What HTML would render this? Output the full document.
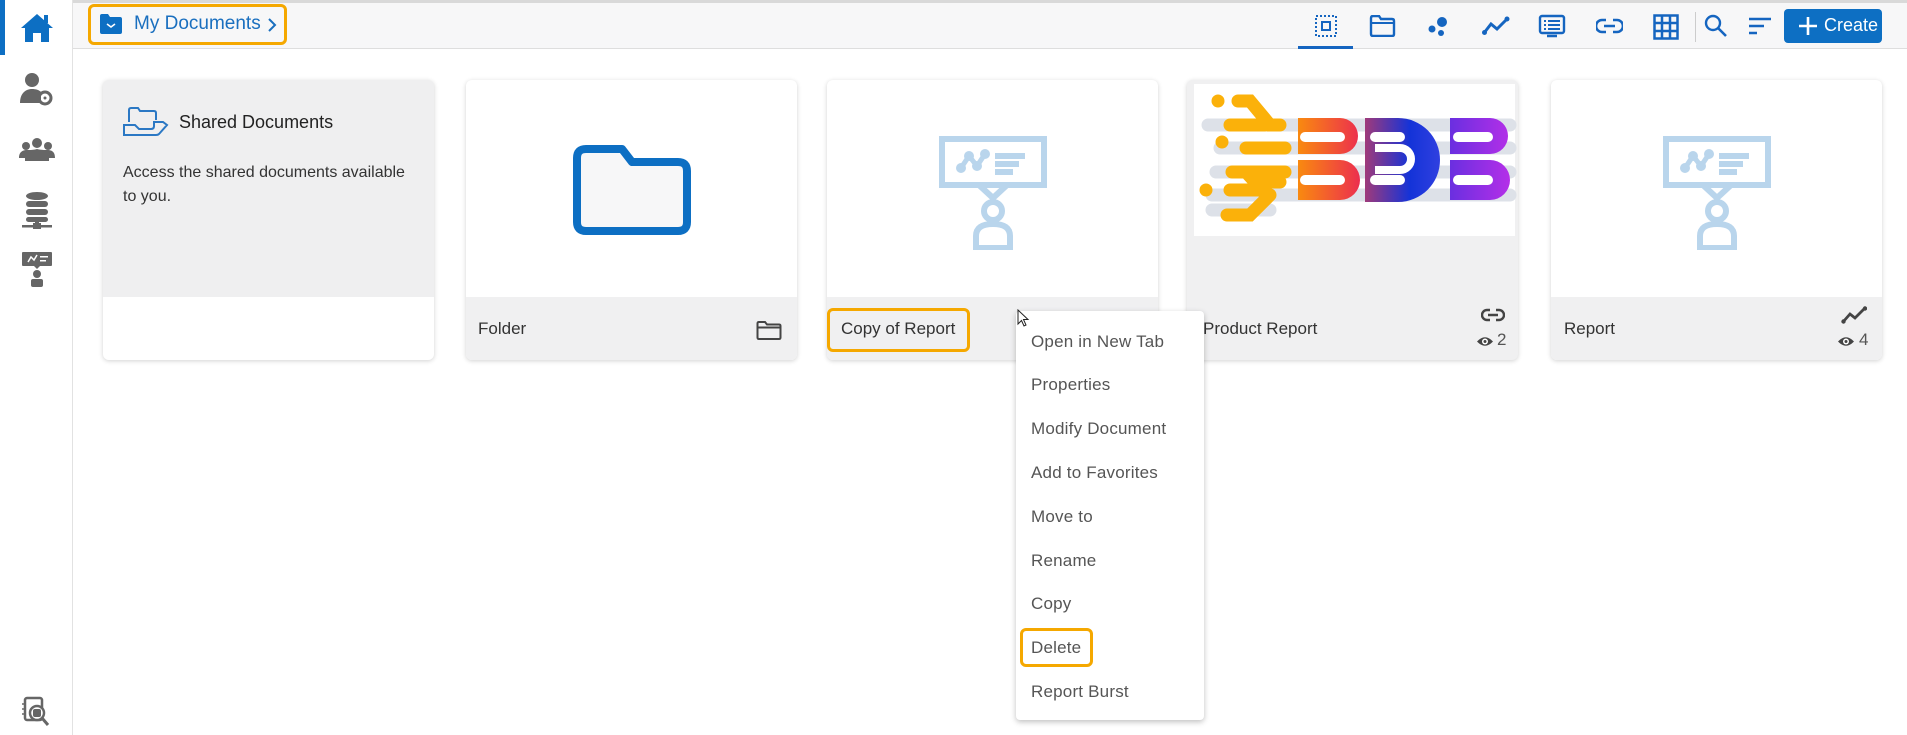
<!DOCTYPE html>
<html><head><meta charset="utf-8"><style>
*{margin:0;padding:0;box-sizing:border-box}
body{width:1907px;height:735px;overflow:hidden;background:#fff;font-family:"Liberation Sans",sans-serif;position:relative}
.abs{position:absolute}
.side{left:0;top:0;width:73px;height:735px;border-right:1px solid #e2e2e2;background:#fff}
.top{left:73px;top:0;width:1834px;height:49px;background:#f7f7f8;border-bottom:1px solid #dedede;border-top:3px solid #d9d9d9}
.card{background:#fff;border-radius:6px;box-shadow:0 1px 5px rgba(0,0,0,.18);overflow:hidden;top:80px;height:280px;width:331px}
.foot{position:absolute;left:0;bottom:0;width:100%;height:63px;background:#f0f0f1}
.lbl{position:absolute;font-size:17px;color:#333;top:22px}
.menu{left:1016px;top:311px;width:188px;height:409px;background:#fff;border-radius:4px;box-shadow:0 2px 6px rgba(0,0,0,.25)}
.menu div{position:absolute;left:15px;font-size:17px;color:#555;letter-spacing:.2px}
.hl{border:3px solid #f5a800;border-radius:6px;position:absolute}
</style></head><body>
<div class="abs side"></div>
<div class="abs" style="left:0;top:0;width:5px;height:55px;background:#0d6fc3"></div>
<svg class="abs" style="left:19px;top:12px" width="36" height="32" viewBox="0 0 36 32"><path d="M18 2 L2 16 L6 16 L6 30 L14 30 L14 21 L22 21 L22 30 L30 30 L30 16 L34 16 Z" fill="#0d6fc3"/><rect x="25" y="3" width="4" height="8" fill="#0d6fc3"/></svg>
<svg class="abs" style="left:19px;top:72px" width="34" height="34" viewBox="0 0 34 34"><circle cx="13" cy="8" r="7" fill="#666"/><path d="M1 31 C1 20 8 17 13 17 C17 17 20 18 22 20 L22 31 Z" fill="#666"/><circle cx="26" cy="26" r="6" fill="none" stroke="#666" stroke-width="3"/><circle cx="26" cy="26" r="1.5" fill="#666"/></svg>
<svg class="abs" style="left:19px;top:138px" width="36" height="24" viewBox="0 0 36 24"><circle cx="18" cy="5" r="5" fill="#666"/><circle cx="7" cy="8" r="4" fill="#666"/><circle cx="29" cy="8" r="4" fill="#666"/><path d="M0 20 C0 13 5 12 8 12 C12 12 14 12 18 11 C22 12 26 12 28 12 C32 12 36 13 36 20 L30 20 L30 23 L6 23 L6 20Z" fill="#666"/></svg>
<svg class="abs" style="left:21px;top:192px" width="32" height="38" viewBox="0 0 32 38"><ellipse cx="16" cy="4" rx="11" ry="4" fill="#666"/><rect x="5" y="9" width="22" height="6" rx="3" fill="#666"/><rect x="5" y="17" width="22" height="6" rx="3" fill="#666"/><rect x="5" y="25" width="22" height="5" rx="2.5" fill="#666"/><rect x="14" y="29" width="4" height="6" fill="#666"/><rect x="1" y="33" width="30" height="2.5" fill="#666"/><rect x="12" y="31" width="8" height="6" fill="#666"/></svg>
<svg class="abs" style="left:22px;top:252px" width="30" height="36" viewBox="0 0 30 36"><rect x="0" y="0" width="30" height="14" rx="1" fill="#666"/><path d="M6 10 L9 5 L12 8 L15 3" stroke="#fff" stroke-width="1.5" fill="none"/><rect x="18" y="4" width="8" height="1.5" fill="#fff"/><rect x="18" y="8" width="6" height="1.5" fill="#fff"/><path d="M12 14 L15 17 L18 14Z" fill="#666"/><circle cx="15" cy="22" r="4" fill="#666"/><rect x="9" y="27" width="12" height="8" rx="2" fill="#666"/></svg>
<svg class="abs" style="left:22px;top:696px" width="30" height="32" viewBox="0 0 30 32"><rect x="3" y="2" width="17" height="22" rx="2" fill="none" stroke="#666" stroke-width="2.5"/><circle cx="15" cy="17" r="7" fill="#fff" stroke="#666" stroke-width="2.5"/><rect x="11" y="13" width="8" height="8" rx="2" fill="#666"/><path d="M20 22 L26 29" stroke="#666" stroke-width="3"/><path d="M0 8 h4 M0 13 h4 M0 18h4" stroke="#666" stroke-width="1.5"/></svg>

<div class="abs top"></div>
<div class="hl" style="left:88px;top:4px;width:199px;height:41px"></div>
<svg class="abs" style="left:99px;top:14px" width="24" height="20" viewBox="0 0 24 20"><path d="M1 2 Q1 0 3 0 L9 0 L11 3 L21 3 Q23 3 23 5 L23 18 Q23 20 21 20 L3 20 Q1 20 1 18Z" fill="#0d6fc3"/><path d="M8 10 L12 13 L16 10" stroke="#fff" stroke-width="1.6" fill="none"/></svg>
<div class="abs" style="left:134px;top:13px;font-size:19px;color:#1a6fbf">My Documents</div>
<svg class="abs" style="left:267px;top:18px" width="10" height="14" viewBox="0 0 10 14"><path d="M2 1 L8 7 L2 13" stroke="#1a6fbf" stroke-width="2" fill="none"/></svg>
<svg class="abs" style="left:1314px;top:14px" width="24" height="24" viewBox="0 0 24 24"><rect x="2" y="2" width="20" height="20" fill="none" stroke="#1565c0" stroke-width="2" stroke-dasharray="2 2"/><rect x="8" y="8" width="8" height="8" fill="none" stroke="#1565c0" stroke-width="2"/></svg>
<div class="abs" style="left:1298px;top:46px;width:55px;height:3px;background:#1565c0"></div>
<svg class="abs" style="left:1369px;top:15px" width="27" height="22" viewBox="0 0 27 22"><path d="M2 3 Q2 1 4 1 L10 1 L12 4 L23 4 Q25 4 25 6 L25 19 Q25 21 23 21 L4 21 Q2 21 2 19Z" fill="none" stroke="#1565c0" stroke-width="2.4"/><path d="M2 8 H25" stroke="#1565c0" stroke-width="2"/></svg>
<svg class="abs" style="left:1427px;top:15px" width="24" height="22" viewBox="0 0 24 22"><circle cx="15" cy="7" r="5" fill="#1565c0"/><circle cx="5" cy="14" r="3.5" fill="#1565c0"/><circle cx="14" cy="18" r="3" fill="#1565c0"/></svg>
<svg class="abs" style="left:1482px;top:16px" width="28" height="20" viewBox="0 0 28 20"><path d="M2 17 L9 8 L15 13 L25 3" stroke="#1565c0" stroke-width="3" fill="none"/><circle cx="2.5" cy="16.5" r="2.5" fill="#1565c0"/><circle cx="25" cy="3" r="2.5" fill="#1565c0"/></svg>
<svg class="abs" style="left:1538px;top:14px" width="28" height="25" viewBox="0 0 28 25"><rect x="2" y="2" width="24" height="17" rx="2" fill="none" stroke="#1565c0" stroke-width="2.4"/><path d="M6 7h2M10 7h12M6 11h2M10 11h12M6 15h2M10 15h12" stroke="#1565c0" stroke-width="2"/><path d="M9 22h10" stroke="#1565c0" stroke-width="2.5"/></svg>
<svg class="abs" style="left:1596px;top:18px" width="27" height="16" viewBox="0 0 27 16"><path d="M10 2 H6 A6 6 0 0 0 6 14 H10 M17 2 H21 A6 6 0 0 1 21 14 H17 M8 8 H19" stroke="#1565c0" stroke-width="2.6" fill="none"/></svg>
<svg class="abs" style="left:1653px;top:14px" width="26" height="26" viewBox="0 0 26 26"><rect x="1.5" y="1.5" width="23" height="23" fill="none" stroke="#1565c0" stroke-width="2.5"/><path d="M9 1v24M17 1v24M1 9h24M1 17h24" stroke="#1565c0" stroke-width="2.5"/></svg>
<div class="abs" style="left:1695px;top:12px;width:1px;height:30px;background:#ccc"></div>
<svg class="abs" style="left:1704px;top:14px" width="24" height="24" viewBox="0 0 24 24"><circle cx="9" cy="9" r="7" fill="none" stroke="#1565c0" stroke-width="2.4"/><path d="M14 14 L22 22" stroke="#1565c0" stroke-width="2.6"/></svg>
<svg class="abs" style="left:1748px;top:17px" width="24" height="19" viewBox="0 0 24 19"><path d="M1 2h22M1 9h15M1 16h8" stroke="#1565c0" stroke-width="2.4"/></svg>
<div class="abs" style="left:1784px;top:9px;width:98px;height:34px;background:#0d6fc3;border-radius:4px"></div>
<svg class="abs" style="left:1798px;top:16px" width="20" height="20" viewBox="0 0 20 20"><path d="M10 1v18M1 10h18" stroke="#fff" stroke-width="2.6"/></svg>
<div class="abs" style="left:1824px;top:15px;font-size:18px;color:#fff">Create</div>

<div class="abs card" style="left:103px;background:#efeff0">
 <div class="foot" style="background:#fff"></div>
 <svg class="abs" style="left:20px;top:27px" width="46" height="30" viewBox="0 0 46 30"><path d="M6 15 V3 Q6 1 8 1 L15 1 L17 4 L31 4 Q33 4 33 6 V13" fill="none" stroke="#2b78c4" stroke-width="2"/><path d="M1 28 V18 L12 18 L16 22 L28 22 Q31 22 31 19 L31 15 L40 15 L44 18 L36 27 Q35 28 33 28Z" fill="none" stroke="#2b78c4" stroke-width="2"/></svg>
 <div class="abs" style="left:76px;top:32px;font-size:18px;color:#222">Shared Documents</div>
 <div class="abs" style="left:20px;top:81px;width:285px;font-size:16px;line-height:24px;color:#333">Access the shared documents available to you.</div>
</div>
<div class="abs card" style="left:466px">
 <svg class="abs" style="left:106px;top:64px" width="120" height="92" viewBox="0 0 120 92"><path d="M5 14 Q5 5 14 5 L50 5 L60 18 L106 18 Q115 18 115 27 L115 78 Q115 87 106 87 L14 87 Q5 87 5 78Z" fill="#f7f7f8" stroke="#0d6fc3" stroke-width="8" stroke-linejoin="round"/></svg>
 <div class="foot"><div class="lbl" style="left:12px">Folder</div>
 <svg class="abs" style="left:290px;top:24px" width="26" height="19" viewBox="0 0 26 19"><path d="M1.5 2.5 Q1.5 1 3 1 L9 1 L11 3.5 L23 3.5 Q24.5 3.5 24.5 5 L24.5 16.5 Q24.5 18 23 18 L3 18 Q1.5 18 1.5 16.5Z M1.5 6.5 H24.5" fill="none" stroke="#444" stroke-width="2"/></svg></div>
</div>
<div class="abs card" style="left:827px">
 <svg class="abs" style="left:112px;top:56px" width="108" height="114" viewBox="0 0 108 114"><rect x="3" y="3" width="102" height="46" fill="none" stroke="#b9d5ec" stroke-width="6"/><path d="M40 49 L54 62 L68 49" stroke="#b9d5ec" stroke-width="6" fill="none"/><path d="M22 32 L30 20 L38 30 L46 18" stroke="#b9d5ec" stroke-width="5" fill="none"/><circle cx="22" cy="32" r="5" fill="#b9d5ec"/><circle cx="30" cy="20" r="5" fill="#b9d5ec"/><circle cx="38" cy="30" r="5" fill="#b9d5ec"/><circle cx="46" cy="18" r="5" fill="#b9d5ec"/><path d="M56 20h30M56 28h24M56 36h18" stroke="#b9d5ec" stroke-width="6"/><circle cx="54" cy="75" r="9" fill="none" stroke="#b9d5ec" stroke-width="6"/><path d="M37 112 V100 Q37 88 54 88 Q71 88 71 100 V112Z" fill="none" stroke="#b9d5ec" stroke-width="6"/></svg>
 <div class="foot"><div class="lbl" style="left:14px">Copy of Report</div></div>
</div>
<div class="hl" style="left:827px;top:308px;width:143px;height:44px"></div>
<div class="abs card" style="left:1187px;background:#f0f0f1">
 <div class="abs" style="left:7px;top:4px;width:321px;height:152px;background:#fff"></div>
 <svg class="abs" style="left:3px;top:0px" width="330" height="160" viewBox="0 0 330 160">
  <defs><linearGradient id="g1" x1="0" x2="1"><stop offset="0" stop-color="#f98a0f"/><stop offset="1" stop-color="#ec2e4f"/></linearGradient><linearGradient id="g2" x1="0" x2="1"><stop offset="0" stop-color="#a03a7a"/><stop offset=".6" stop-color="#1433d8"/><stop offset="1" stop-color="#3040e0"/></linearGradient><linearGradient id="g3" x1="0" x2="1"><stop offset="0" stop-color="#6a2fe0"/><stop offset="1" stop-color="#b42fe8"/></linearGradient></defs>
  <g stroke="#dde1e8" stroke-width="13" stroke-linecap="round"><path d="M18 45H320M30 68H320M26 92H320M22 115H320M22 130H80"/></g>
  <g stroke="#fbb10a" stroke-width="13" stroke-linecap="round" fill="none"><path d="M28 21h0M48 21 H60 L80 45 H90 M40 45 H75 M32 62h0 M56 68 H95 M42 92 H95 M56 92 L65 102 H90 M16 110h0 M40 110 H70 L80 115 M37 135 H60 L80 115"/></g>
  <path d="M108 38 H150 A18 18 0 0 1 150 74 H108 Z M108 80 H150 A20 20 0 0 1 150 120 H108 Z" fill="url(#g1)"/>
  <path d="M175 38 H208 A42 42 0 0 1 208 122 H175 Z" fill="url(#g2)"/>
  <path d="M260 38 H300 A18 18 0 0 1 300 74 H260 Z M260 80 H300 A20 20 0 0 1 300 120 H260 Z" fill="url(#g3)"/>
  <g stroke="#fff" stroke-width="10" stroke-linecap="round"><path d="M115 57H150M115 100H150M185 57H210M185 100H210M268 57H298M268 100H298"/></g>
  <path d="M185 68 H210 A10 10 0 0 1 210 90 H185" stroke="#fff" stroke-width="8" fill="none"/>
 </svg>
 <div class="foot" style="background:transparent"><div class="lbl" style="left:16px">Product Report</div>
 <svg class="abs" style="left:294px;top:11px" width="24" height="14" viewBox="0 0 24 14"><path d="M9 2H6A5 5 0 0 0 6 12H9M15 2H18A5 5 0 0 1 18 12H15M7 7H17" stroke="#444" stroke-width="2.4" fill="none"/></svg>
 <svg class="abs" style="left:289px;top:38px" width="18" height="13" viewBox="0 0 18 13"><path d="M1 6.5 Q9 -2 17 6.5 Q9 15 1 6.5Z" fill="#444"/><circle cx="9" cy="6.5" r="3" fill="#fff"/><circle cx="9" cy="6.5" r="1.5" fill="#444"/></svg>
 <div class="abs" style="left:310px;top:33px;font-size:17px;color:#555">2</div></div>
</div>
<div class="abs card" style="left:1551px">
 <svg class="abs" style="left:112px;top:56px" width="108" height="114" viewBox="0 0 108 114"><rect x="3" y="3" width="102" height="46" fill="none" stroke="#b9d5ec" stroke-width="6"/><path d="M40 49 L54 62 L68 49" stroke="#b9d5ec" stroke-width="6" fill="none"/><path d="M22 32 L30 20 L38 30 L46 18" stroke="#b9d5ec" stroke-width="5" fill="none"/><circle cx="22" cy="32" r="5" fill="#b9d5ec"/><circle cx="30" cy="20" r="5" fill="#b9d5ec"/><circle cx="38" cy="30" r="5" fill="#b9d5ec"/><circle cx="46" cy="18" r="5" fill="#b9d5ec"/><path d="M56 20h30M56 28h24M56 36h18" stroke="#b9d5ec" stroke-width="6"/><circle cx="54" cy="75" r="9" fill="none" stroke="#b9d5ec" stroke-width="6"/><path d="M37 112 V100 Q37 88 54 88 Q71 88 71 100 V112Z" fill="none" stroke="#b9d5ec" stroke-width="6"/></svg>
 <div class="foot"><div class="lbl" style="left:13px">Report</div>
 <svg class="abs" style="left:290px;top:9px" width="26" height="18" viewBox="0 0 26 18"><path d="M2 16 L9 8 L14 12 L24 2" stroke="#444" stroke-width="2.8" fill="none"/><circle cx="2.5" cy="15.5" r="2.2" fill="#444"/><circle cx="24" cy="2.5" r="2.2" fill="#444"/></svg>
 <svg class="abs" style="left:286px;top:38px" width="18" height="13" viewBox="0 0 18 13"><path d="M1 6.5 Q9 -2 17 6.5 Q9 15 1 6.5Z" fill="#444"/><circle cx="9" cy="6.5" r="3" fill="#fff"/><circle cx="9" cy="6.5" r="1.5" fill="#444"/></svg>
 <div class="abs" style="left:308px;top:33px;font-size:17px;color:#555">4</div></div>
</div>

<div class="abs menu">
 <div style="top:21px">Open in New Tab</div>
 <div style="top:64px">Properties</div>
 <div style="top:108px">Modify Document</div>
 <div style="top:152px">Add to Favorites</div>
 <div style="top:196px">Move to</div>
 <div style="top:240px">Rename</div>
 <div style="top:283px">Copy</div>
 <div style="top:327px">Delete</div>
 <div style="top:371px">Report Burst</div>
</div>
<div class="hl" style="left:1020px;top:628px;width:73px;height:39px"></div>
<svg class="abs" style="left:1017px;top:309px" width="14" height="20" viewBox="0 0 14 20"><path d="M1 1 L1 15 L4.5 11.5 L7 17 L9 16 L6.5 10.5 L11 10.5Z" fill="#fff" stroke="#222" stroke-width="1"/></svg>
</body></html>
